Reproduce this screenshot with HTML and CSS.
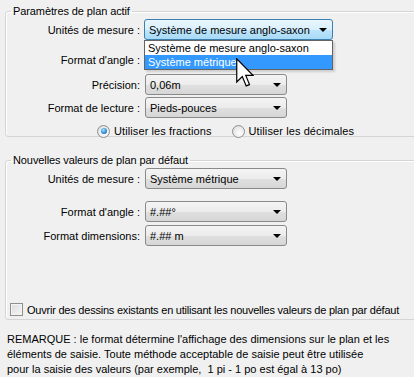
FILE: index.html
```html
<!DOCTYPE html>
<html>
<head>
    <title>Paramètres de plan</title>
    <link rel="stylesheet" href="styles.css">
</head>
<body>

    <div class="dialog">
        <fieldset class="group group-active">
            <legend>Paramètres de plan actif</legend>

            <div class="row row-units">
                <span class="label">Unités de mesure :</span>
                <div class="combo combo-wide combo-open">
                    <span class="value">Système de mesure anglo-saxon</span>
                    <i class="arrow"></i>
                    <ul class="droplist">
                        <li>Système de mesure anglo-saxon</li>
                        <li class="selected">Système métrique</li>
                    </ul>
                </div>
            </div>

            <div class="row row-angle">
                <span class="label">Format d'angle :</span>
                <div class="combo"><span class="value">#.##°</span><i class="arrow"></i></div>
            </div>

            <div class="row row-precision">
                <span class="label">Précision:</span>
                <div class="combo"><span class="value">0,06m</span><i class="arrow"></i></div>
            </div>

            <div class="row row-reading">
                <span class="label">Format de lecture :</span>
                <div class="combo"><span class="value">Pieds-pouces</span><i class="arrow"></i></div>
            </div>

            <div class="radios">
                <label class="radio"><span class="dot checked"></span>Utiliser les fractions</label>
                <label class="radio"><span class="dot"></span>Utiliser les décimales</label>
            </div>
        </fieldset>

        <fieldset class="group group-default">
            <legend>Nouvelles valeurs de plan par défaut</legend>

            <div class="row row-def-units">
                <span class="label">Unités de mesure :</span>
                <div class="combo"><span class="value">Système métrique</span><i class="arrow"></i></div>
            </div>

            <div class="row row-def-angle">
                <span class="label">Format d'angle :</span>
                <div class="combo"><span class="value">#.##°</span><i class="arrow"></i></div>
            </div>

            <div class="row row-def-dim">
                <span class="label">Format dimensions:</span>
                <div class="combo"><span class="value">#.## m</span><i class="arrow"></i></div>
            </div>

            <label class="check"><span class="box"></span>Ouvrir des dessins existants en utilisant les nouvelles valeurs de plan par défaut</label>
        </fieldset>

        <p class="note">
            REMARQUE : le format détermine l'affichage des dimensions sur le plan et les<br>
            éléments de saisie. Toute méthode acceptable de saisie peut être utilisée<br>
            pour la saisie des valeurs (par exemple,&nbsp; 1 pi - 1 po est égal à 13 po)
        </p>
    </div>

    <!-- mouse pointer over the open list -->
    <svg class="cursor" width="18" height="30" viewBox="0 0 12 20">
        <path d="M0.5 0.5 L0.5 16 L4.2 12.4 L6.8 18.6 L9 17.7 L6.5 11.6 L11.3 11.6 Z"
              fill="#fff" stroke="#000" stroke-width="0.8" stroke-linejoin="miter"/>
    </svg>

</body>
</html>
```

FILE: styles.css
```css
body {
    font-family: "Liberation Sans", Arial, sans-serif;
    font-size: 11px;
    color: #000;
    background-color: #f0f0f0;
    margin: 0;
    padding: 0;
    overflow: hidden;
}

.dialog {
    width: 420px;
}

/* group boxes */
.group {
    border: 1px solid #d5d5d5;
    border-radius: 3px;
    margin: 0 0 0 5px;
    padding: 0;
    min-width: 0;
    box-shadow: inset 1px 1px 0 #fff;
}

.group legend {
    padding: 0 2px;
    margin-left: 5px;
    line-height: 14px;
    letter-spacing: -0.1px;
}

.group-active {
    margin-top: 4px;
    height: 131px;
}

.group-default {
    margin-top: 16px;
    padding-bottom: 3px;
}

/* label + combo rows */
.row {
    display: flex;
    align-items: center;
    height: 21px;
}

.label {
    width: 134px;
    text-align: right;
    margin-right: 5px;
    white-space: nowrap;
}

.row-units { margin-top: 1px; }
.row-angle { margin-top: 9px; }
.row-precision { margin-top: 4px; }
.row-reading { margin-top: 2px; }

.row-def-units { margin-top: 1px; }
.row-def-angle { margin-top: 12px; }
.row-def-dim { margin-top: 3px; }

.combo {
    position: relative;
    box-sizing: border-box;
    width: 142px;
    height: 21px;
    padding: 0 16px 0 4px;
    border: 1px solid #8a8a8a;
    border-radius: 3px;
    background: linear-gradient(#f4f4f4 0%, #ececec 50%, #e0e0e0 51%, #d6d6d6 100%);
    display: flex;
    align-items: center;
    white-space: nowrap;
}

.combo-wide {
    width: 189px;
    margin-left: -1px;
}

.combo-open {
    border-color: #3c7fb1;
    background: linear-gradient(#eaf6fd 0%, #d9f0fc 50%, #bee6fd 51%, #a7d9f5 100%);
}

.arrow {
    position: absolute;
    right: 5px;
    top: 8px;
    width: 0;
    height: 0;
    border-top: 4px solid #000;
    border-left: 4px solid transparent;
    border-right: 4px solid transparent;
}

/* open drop-down list */
.droplist {
    position: absolute;
    top: 20px;
    left: -1px;
    width: 189px;
    box-sizing: border-box;
    margin: 0;
    padding: 0;
    list-style: none;
    background-color: #fff;
    border: 1px solid #646464;
    box-shadow: 2px 2px 2px rgba(0, 0, 0, 0.15);
    z-index: 2;
}

.droplist li {
    height: 14px;
    line-height: 14px;
    padding-left: 3px;
}

.droplist li.selected {
    background-color: #3399ff;
    color: #fff;
}

/* radio buttons */
.radios {
    display: flex;
    margin: 6px 0 0 91px;
    height: 14px;
    align-items: center;
}

.radio {
    display: flex;
    align-items: center;
    margin-right: 20px;
    letter-spacing: 0.1px;
}

.dot {
    box-sizing: border-box;
    width: 13px;
    height: 13px;
    margin-right: 4px;
    border: 1px solid #8e8f8f;
    border-radius: 50%;
    background: radial-gradient(circle at 60% 65%, #fff 0%, #e8e8e8 60%, #cfcfcf 100%);
    position: relative;
}

.dot.checked::after {
    content: "";
    position: absolute;
    left: 2.5px;
    top: 2.5px;
    width: 6px;
    height: 6px;
    border-radius: 50%;
    background: radial-gradient(circle at 40% 35%, #aee3ff 0%, #2c8fd8 55%, #174f8d 100%);
}

/* check box */
.check {
    display: flex;
    align-items: center;
    margin: 57px 0 0 4px;
    white-space: nowrap;
    letter-spacing: -0.22px;
}

.box {
    box-sizing: border-box;
    width: 13px;
    height: 13px;
    margin-right: 4px;
    border: 1px solid #8e8f8f;
    background: linear-gradient(135deg, #dcdcdc 0%, #f6f6f6 100%);
    box-shadow: inset 0 0 0 1px #f4f4f4;
}

.note {
    margin: 12px 0 0 7px;
    line-height: 15px;
}

.cursor {
    position: absolute;
    left: 236px;
    top: 58px;
    z-index: 3;
}
```
